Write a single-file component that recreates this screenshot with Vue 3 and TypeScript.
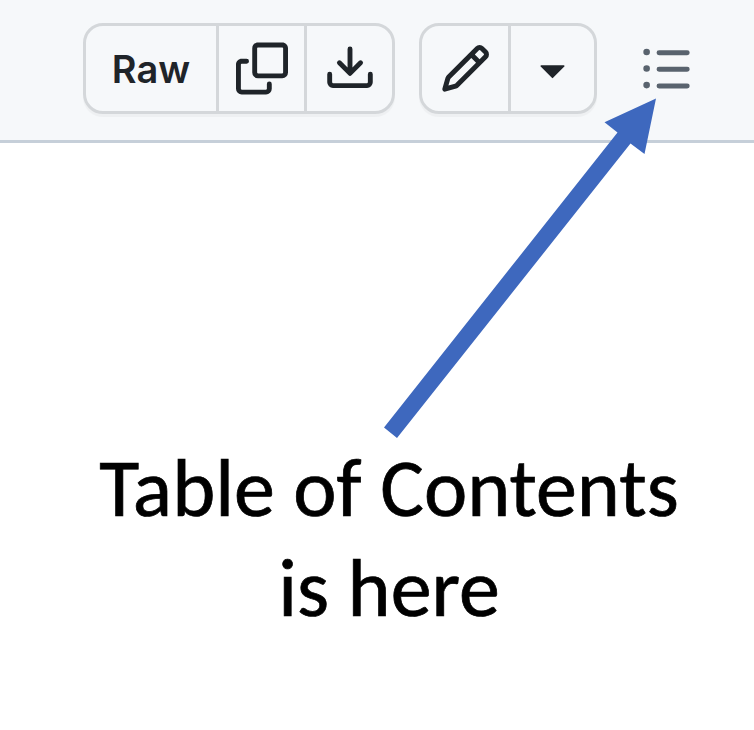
<script setup lang="ts">
const icons = {
  copy: [
    'M0 6.75C0 5.784.784 5 1.75 5h1.5a.75.75 0 0 1 0 1.5h-1.5a.25.25 0 0 0-.25.25v7.5c0 .138.112.25.25.25h7.5a.25.25 0 0 0 .25-.25v-1.5a.75.75 0 0 1 1.5 0v1.5A1.75 1.75 0 0 1 9.25 16h-7.5A1.75 1.75 0 0 1 0 14.25Z',
    'M5 1.75C5 .784 5.784 0 6.75 0h7.5C15.216 0 16 .784 16 1.75v7.5A1.75 1.75 0 0 1 14.25 11h-7.5A1.75 1.75 0 0 1 5 9.25Zm1.75-.25a.25.25 0 0 0-.25.25v7.5c0 .138.112.25.25.25h7.5a.25.25 0 0 0 .25-.25v-7.5a.25.25 0 0 0-.25-.25Z',
  ],
  download: [
    'M2.75 14A1.75 1.75 0 0 1 1 12.25v-2.5a.75.75 0 0 1 1.5 0v2.5c0 .138.112.25.25.25h10.5a.25.25 0 0 0 .25-.25v-2.5a.75.75 0 0 1 1.5 0v2.5A1.75 1.75 0 0 1 13.25 14Z',
    'M7.25 7.689V2a.75.75 0 0 1 1.5 0v5.689l1.97-1.969a.749.749 0 1 1 1.06 1.06l-3.25 3.25a.749.749 0 0 1-1.06 0L4.22 6.78a.749.749 0 1 1 1.06-1.06l1.97 1.969Z',
  ],
  pencil: [
    'M11.013 1.427a1.75 1.75 0 0 1 2.474 0l1.086 1.086a1.75 1.75 0 0 1 0 2.474l-8.61 8.61c-.21.21-.47.364-.756.445l-3.251.93a.75.75 0 0 1-.927-.928l.929-3.25c.081-.286.235-.547.445-.758l8.61-8.61Zm.176 4.823L9.75 4.81l-6.286 6.287a.253.253 0 0 0-.064.108l-.558 1.953 1.953-.558a.253.253 0 0 0 .108-.064Zm1.238-3.763a.25.25 0 0 0-.354 0L10.811 3.75l1.439 1.44 1.263-1.263a.25.25 0 0 0 0-.354Z',
  ],
  triangle: [
    'm4.427 7.427 3.396 3.396a.25.25 0 0 0 .354 0l3.396-3.396A.25.25 0 0 0 11.396 7H4.604a.25.25 0 0 0-.177.427Z',
  ],
  list: [
    'M5.75 2.5h8.5a.75.75 0 0 1 0 1.5h-8.5a.75.75 0 0 1 0-1.5Zm0 5h8.5a.75.75 0 0 1 0 1.5h-8.5a.75.75 0 0 1 0-1.5Zm0 5h8.5a.75.75 0 0 1 0 1.5h-8.5a.75.75 0 0 1 0-1.5ZM2 14a1 1 0 1 1 0-2 1 1 0 0 1 0 2Zm1-6a1 1 0 1 1-2 0 1 1 0 0 1 2 0ZM2 4a1 1 0 1 1 0-2 1 1 0 0 1 0 2Z',
  ],
}
</script>

<template>
  <div class="page">
    <header class="toolbar">
      <div class="group file-group">
        <button class="cell raw">Raw</button>
        <button class="cell" aria-label="Copy">
          <svg class="icon" viewBox="0 0 16 16"><path v-for="d in icons.copy" :key="d" :d="d" /></svg>
        </button>
        <button class="cell" aria-label="Download">
          <svg class="icon" viewBox="0 0 16 16"><path v-for="d in icons.download" :key="d" :d="d" /></svg>
        </button>
      </div>
      <div class="group edit-group">
        <button class="cell" aria-label="Edit">
          <svg class="icon" viewBox="0 0 16 16"><path v-for="d in icons.pencil" :key="d" :d="d" /></svg>
        </button>
        <button class="cell" aria-label="More">
          <svg class="icon" viewBox="0 0 16 16"><path v-for="d in icons.triangle" :key="d" :d="d" /></svg>
        </button>
      </div>
      <button class="outline" aria-label="Outline">
        <svg class="icon" viewBox="0 0 16 16"><path v-for="d in icons.list" :key="d" :d="d" /></svg>
      </button>
    </header>
    <main class="note">
      <div class="line">Table of Contents</div>
      <div class="line">is here</div>
    </main>
    <svg class="arrow" viewBox="0 0 754 730">
      <polygon points="384,427.5 617.5,132.5 604.5,122.3 656,98.5 644.5,154 630.5,143.5 397,438" />
    </svg>
  </div>
</template>

<style>
body {
  margin: 0;
  background: #fff;
}
</style>

<style scoped>
.page {
  position: relative;
  width: 754px;
  height: 730px;
  overflow: hidden;
  background: #fff;
}
.toolbar {
  display: flex;
  align-items: flex-start;
  box-sizing: border-box;
  height: 143px;
  padding: 23px 0 0 83px;
  background: #f6f8fa;
  border-bottom: 3px solid #c6cfd9;
}
.group {
  display: flex;
  box-sizing: border-box;
  height: 91px;
  border: 3px solid #d4d7da;
  border-radius: 20px;
  box-shadow: 0 3px 1px rgba(31, 35, 40, 0.035);
}
.file-group {
  width: 312px;
}
.edit-group {
  width: 178px;
  margin-left: 24px;
}
button {
  padding: 0;
  border: 0;
  background: none;
  color: #1f2429;
}
.cell {
  display: flex;
  flex: 1;
  align-items: center;
  justify-content: center;
}
.cell + .cell {
  border-left: 3px solid #d4d7da;
}
.edit-group .cell:first-child {
  padding-left: 2px;
}
.raw {
  flex: 0 0 130px;
  padding-top: 1px;
  font: 580 38px/1 Inter, sans-serif;
}
.icon {
  display: block;
  flex: none;
  width: 53px;
  height: 53px;
  fill: currentColor;
}
.file-group .icon {
  width: 52px;
}
.outline {
  margin: 19px 0 0 42.5px;
  color: #59636e;
}
.note {
  padding-top: 295px;
  color: #000;
  font: 400 82px/100px Carlito, Lato, sans-serif;
  text-align: center;
}
.line {
  -webkit-text-stroke: 0.7px #000;
  width: fit-content;
  margin-left: 389px;
  white-space: nowrap;
  transform: translateX(-50%);
}
.arrow {
  position: absolute;
  inset: 0;
  width: 754px;
  height: 730px;
  fill: #3e68be;
  pointer-events: none;
}
</style>
